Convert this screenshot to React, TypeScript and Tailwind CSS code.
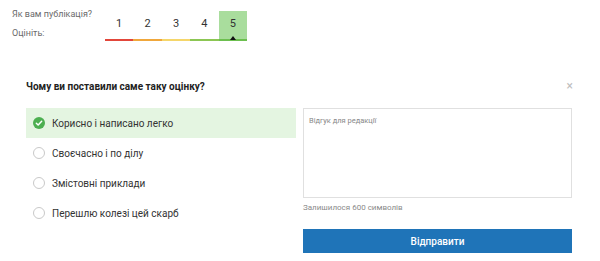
import React from 'react';

const scores = [
  { n: 1, bar: 'border-[#e2463a]' },
  { n: 2, bar: 'border-[#f0a73b]' },
  { n: 3, bar: 'border-[#f5d66a]' },
  { n: 4, bar: 'border-[#8cc653]' },
  { n: 5, bar: 'border-[#6cbf4f]' },
];

const reasons = [
  'Корисно і написано легко',
  'Своєчасно і по ділу',
  'Змістовні приклади',
  'Перешлю колезі цей скарб',
];

export default function App() {
  const selected = 5;
  const picked = 0;

  return (
    <div className="w-[600px] h-[261px] bg-white font-['Roboto',sans-serif] overflow-hidden">
      {/* Rating strip */}
      <div className="flex pl-[12px] pt-[11px]">
        <div className="w-[93px] h-[24px] -mt-[6px] whitespace-nowrap text-[9px] leading-[19px] text-[#6b6b6b]">
          <div>Як вам публікація?</div>
          <div>Оцініть:</div>
        </div>
        <div className="flex">
          {scores.map((s) => (
            <div
              key={s.n}
              className={`relative w-[28.4px] h-[30px] flex items-center justify-center border-b-2 pb-[2px] text-[11px] text-[#333] ${s.bar} ${
                s.n === selected ? 'bg-[#a9dd9d]' : ''
              }`}
            >
              {s.n}
              {s.n === selected && (
                <span className="absolute bottom-[-1px] left-1/2 -translate-x-1/2 w-0 h-0 border-l-[3px] border-r-[3px] border-b-[4px] border-l-transparent border-r-transparent border-b-[#111]" />
              )}
            </div>
          ))}
        </div>
      </div>

      {/* Feedback form */}
      <div className="pl-[26px] pr-[28px] pt-[39px]">
        <div className="flex items-center justify-between h-[12px]">
          <h2 className="text-[10px] font-bold text-[#222]">Чому ви поставили саме таку оцінку?</h2>
          <span className="text-[#bdbdbd] text-[12px] leading-none mr-[-1px]">×</span>
        </div>

        <div className="flex gap-[7px] mt-[16px]">
          <div className="w-[270px] flex flex-col">
            {reasons.map((r, i) => (
              <div
                key={r}
                className={`h-[30px] flex items-center pl-[7px] gap-[7px] text-[10px] text-[#333] ${
                  i === picked ? 'bg-[#e4f5e1]' : ''
                }`}
              >
                {i === picked ? (
                  <svg width="12" height="12" viewBox="0 0 13 13">
                    <circle cx="6.5" cy="6.5" r="6.5" fill="#4caf50" />
                    <path d="M3.6 6.7l2 2 3.8-4" stroke="#fff" strokeWidth="1.6" fill="none" strokeLinecap="round" strokeLinejoin="round" />
                  </svg>
                ) : (
                  <span className="w-[12px] h-[12px] rounded-full border border-[#c9c9c9] bg-white" />
                )}
                <span>{r}</span>
              </div>
            ))}
          </div>

          <div className="w-[269px] flex flex-col">
            <div className="h-[90px] border border-[#e0e0e0] px-[5px] py-[6px] text-[7.5px] text-[#888]">
              Відгук для редакції
            </div>
            <div className="mt-[5px] leading-[10px] text-[8px] text-[#8a8a8a]">Залишилося 600 символів</div>
            <button className="mt-[16px] h-[24px] bg-[#1f74b8] text-white text-[10px] font-medium">
              Відправити
            </button>
          </div>
        </div>
      </div>
    </div>
  );
}
